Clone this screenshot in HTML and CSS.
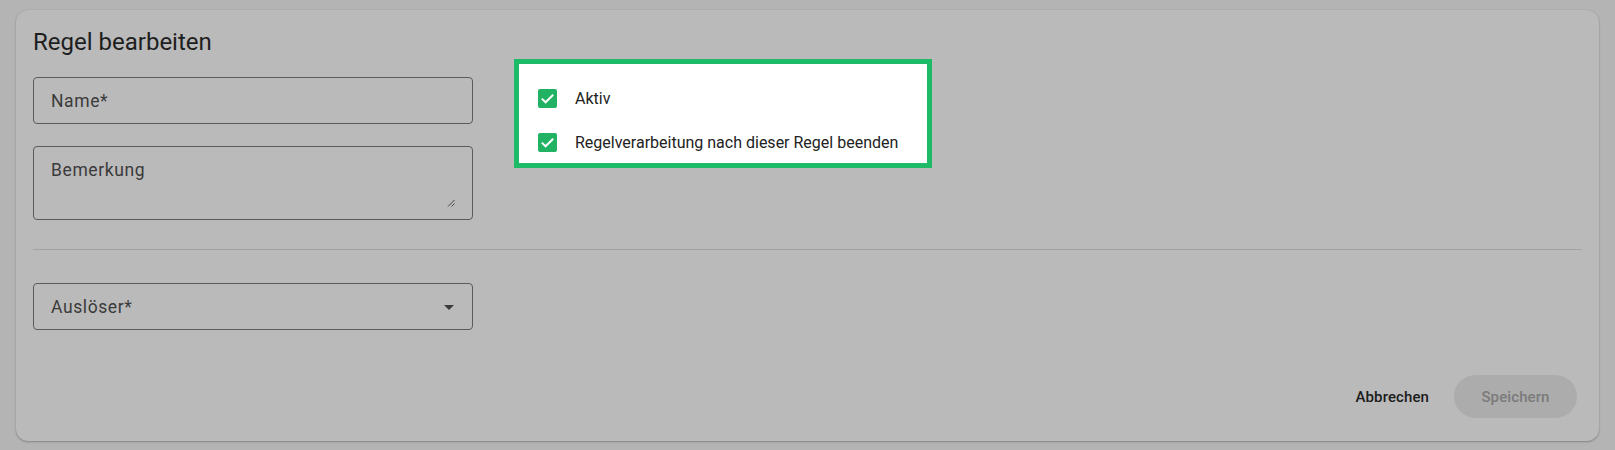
FILE: index.html
```html
<!DOCTYPE html>
<html lang="de">
<head>
<meta charset="utf-8">
<title>Regel bearbeiten</title>
<link rel="stylesheet" href="styles.css">
</head>
<body>
<div class="card">
  <h1 class="title">Regel bearbeiten</h1>
  <div class="top-row">
    <div class="fields">
      <div class="field field-name"><span class="field-label">Name*</span></div>
      <div class="field field-area">
        <span class="field-label">Bemerkung</span>
        <svg class="resize" width="8" height="8" viewBox="0 0 8 8"><path d="M1 7.5 L7.5 1 M4.5 7.5 L7.5 4.5" stroke="#444" stroke-width="1" fill="none"/></svg>
      </div>
    </div>
    <div class="highlight">
      <div class="check-row"><span class="check"><svg width="19" height="19" viewBox="0 0 19 19"><path d="M3.8 9.6 L7.6 13.3 L15.2 5.8" stroke="#fff" stroke-width="2" fill="none"/></svg></span><span class="check-label">Aktiv</span></div>
      <div class="check-row"><span class="check"><svg width="19" height="19" viewBox="0 0 19 19"><path d="M3.8 9.6 L7.6 13.3 L15.2 5.8" stroke="#fff" stroke-width="2" fill="none"/></svg></span><span class="check-label">Regelverarbeitung nach dieser Regel beenden</span></div>
    </div>
  </div>
  <hr class="divider">
  <div class="field field-select"><span class="field-label">Auslöser*</span><span class="arrow"></span></div>
  <div class="actions">
    <button class="btn btn-text">Abbrechen</button>
    <button class="btn btn-save" disabled>Speichern</button>
  </div>
</div>
</body>
</html>
```
FILE: styles.css
```css
* { box-sizing: border-box; }
html, body { margin: 0; padding: 0; }
body {
  background: #b4b4b4;
  font-family: Roboto, "Liberation Sans", sans-serif;
  padding: 10px 16px 9px 16px;
}
.card {
  background: #bababa;
  border-radius: 12px;
  box-shadow: 0 1px 2px rgba(0,0,0,0.25), 0 0 1px rgba(0,0,0,0.15);
  height: 431px;
  padding: 16px 17px 23px 17px;
  display: flex;
  flex-direction: column;
}
.title {
  margin: 0 0 1px 0;
  font-size: 24px;
  line-height: 32px;
  font-weight: 400;
  color: #1e1e1e;
}
.top-row {
  display: flex;
  align-items: flex-start;
  gap: 41px;
}
.fields {
  width: 440px;
  padding-top: 18px;
  display: flex;
  flex-direction: column;
  gap: 22px;
}
.field {
  position: relative;
  width: 440px;
  border: 1px solid #5c5c5c;
  border-radius: 4px;
  display: flex;
  align-items: center;
  padding: 0 17px;
}
.field-label {
  font-size: 17.5px;
  letter-spacing: 0.6px;
  color: #3a3a3a;
}
.field-name, .field-select { height: 47px; }
.field-area {
  height: 74px;
  align-items: flex-start;
  padding-top: 13px;
}
.resize {
  position: absolute;
  right: 17px;
  bottom: 12px;
}
.highlight {
  width: 418px;
  height: 109px;
  border: 5px solid #1dba67;
  background: #ffffff;
  padding: 12px 19px 0 19px;
}
.check-row {
  height: 44px;
  display: flex;
  align-items: center;
  gap: 18px;
}
.check {
  width: 19px;
  height: 19px;
  border-radius: 2px;
  background: #21b363;
  display: flex;
}
.check-label {
  font-size: 16px;
  color: #222222;
}
.divider {
  margin: 29px 0 0 0;
  border: 0;
  height: 1px;
  background: #a3a3a3;
}
.field-select { margin-top: 33px; }
.arrow {
  position: absolute;
  right: 18px;
  top: 21px;
  width: 0;
  height: 0;
  border-left: 5px solid transparent;
  border-right: 5px solid transparent;
  border-top: 5px solid #3a3a3a;
}
.actions {
  margin-top: auto;
  display: flex;
  justify-content: flex-end;
  align-items: center;
  gap: 13px;
  padding-right: 5px;
}
.btn {
  font-family: Roboto, "Liberation Sans", sans-serif;
  font-size: 15px;
  font-weight: 500;
  letter-spacing: 0.1px;
  height: 43px;
  border: 0;
  border-radius: 22px;
  background: transparent;
  padding: 0 12px;
}
.btn-text { color: #1c1c1c; }
.btn-save {
  width: 123px;
  background: #acacac;
  color: #7b7b7b;
}
```
